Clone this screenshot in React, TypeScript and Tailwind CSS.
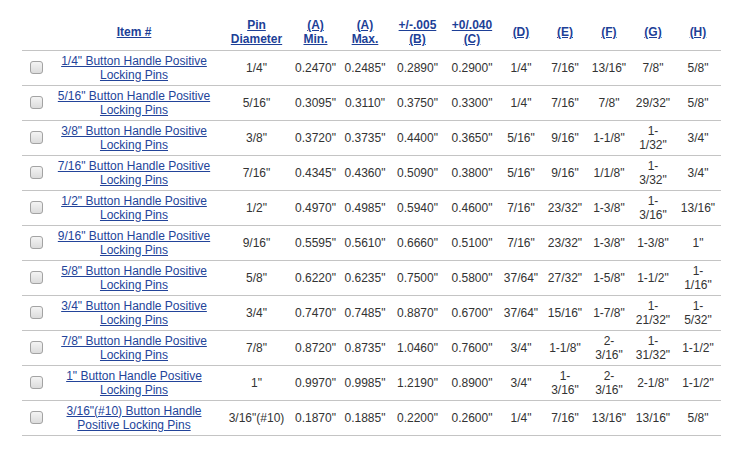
import React from "react";

type Row = { item: string; pin: string; vals: string[] };

const rows: Row[] = [
  { item: '1/4" Button Handle Positive Locking Pins', pin: '1/4"', vals: ['0.2470"', '0.2485"', '0.2890"', '0.2900"', '1/4"', '7/16"', '13/16"', '7/8"', '5/8"'] },
  { item: '5/16" Button Handle Positive Locking Pins', pin: '5/16"', vals: ['0.3095"', '0.3110"', '0.3750"', '0.3300"', '1/4"', '7/16"', '7/8"', '29/32"', '5/8"'] },
  { item: '3/8" Button Handle Positive Locking Pins', pin: '3/8"', vals: ['0.3720"', '0.3735"', '0.4400"', '0.3650"', '5/16"', '9/16"', '1-1/8"', '1-1/32"', '3/4"'] },
  { item: '7/16" Button Handle Positive Locking Pins', pin: '7/16"', vals: ['0.4345"', '0.4360"', '0.5090"', '0.3800"', '5/16"', '9/16"', '1/1/8"', '1-3/32"', '3/4"'] },
  { item: '1/2" Button Handle Positive Locking Pins', pin: '1/2"', vals: ['0.4970"', '0.4985"', '0.5940"', '0.4600"', '7/16"', '23/32"', '1-3/8"', '1-3/16"', '13/16"'] },
  { item: '9/16" Button Handle Positive Locking Pins', pin: '9/16"', vals: ['0.5595"', '0.5610"', '0.6660"', '0.5100"', '7/16"', '23/32"', '1-3/8"', '1-3/8"', '1"'] },
  { item: '5/8" Button Handle Positive Locking Pins', pin: '5/8"', vals: ['0.6220"', '0.6235"', '0.7500"', '0.5800"', '37/64"', '27/32"', '1-5/8"', '1-1/2"', '1-1/16"'] },
  { item: '3/4" Button Handle Positive Locking Pins', pin: '3/4"', vals: ['0.7470"', '0.7485"', '0.8870"', '0.6700"', '37/64"', '15/16"', '1-7/8"', '1-21/32"', '1-5/32"'] },
  { item: '7/8" Button Handle Positive Locking Pins', pin: '7/8"', vals: ['0.8720"', '0.8735"', '1.0460"', '0.7600"', '3/4"', '1-1/8"', '2-3/16"', '1-31/32"', '1-1/2"'] },
  { item: '1" Button Handle Positive Locking Pins', pin: '1"', vals: ['0.9970"', '0.9985"', '1.2190"', '0.8900"', '3/4"', '1-3/16"', '2-3/16"', '2-1/8"', '1-1/2"'] },
  { item: '3/16"(#10) Button Handle Positive Locking Pins', pin: '3/16"(#10)', vals: ['0.1870"', '0.1885"', '0.2200"', '0.2600"', '1/4"', '7/16"', '13/16"', '13/16"', '5/8"'] },
];

const headers: React.ReactNode[] = [
  <>(A)<br />Min.</>,
  <>(A)<br />Max.</>,
  <>+/-.005<br />(B)</>,
  <>+0/.040<br />(C)</>,
  <>(D)</>,
  <>(E)</>,
  <>(F)</>,
  <>(G)</>,
  <>(H)</>,
];

const valWidths = ["w-[48px]", "w-[50px]", "w-[55px]", "w-[54px]", "w-[44px]", "w-[44px]", "w-[44px]", "w-[44px]", "w-[46px]"];

function Check() {
  return (
    <div className="mx-auto h-[13px] w-[13px] rounded-[3px] border border-[#a3a3a3] bg-gradient-to-b from-[#f4f4f4] to-[#dcdcdc]" />
  );
}

export default function App() {
  return (
    <div className="min-h-[454px] w-[750px] bg-white pt-[14px] pl-[22px] font-['Liberation_Sans',Arial,sans-serif] text-[12px] leading-[14px] text-[#333]">
      <table className="table-fixed border-collapse">
        <colgroup>
          <col className="w-[24px]" />
          <col className="w-[176px]" />
          <col className="w-[69px]" />
          {valWidths.map((w, i) => (
            <col key={i} className={w} />
          ))}
        </colgroup>
        <thead>
          <tr className="border-b border-[#c4c4c4]">
            <th className="h-[36px] p-0" />
            <th className="h-[36px] px-[5px] pt-[4px] pb-[3px] text-center align-middle font-bold text-[#1d3f97] underline">Item #</th>
            <th className="h-[36px] px-[5px] pt-[4px] pb-[3px] text-center align-middle font-bold text-[#1d3f97] underline">Pin<br />Diameter</th>
            {headers.map((h, i) => (
              <th key={i} className="h-[36px] px-[4px] pt-[4px] pb-[3px] text-center align-middle font-bold text-[#1d3f97] underline">
                {h}
              </th>
            ))}
          </tr>
        </thead>
        <tbody>
          {rows.map((r, i) => (
            <tr key={i} className="border-b border-[#c4c4c4]">
              <td className="h-[35px] p-0 pl-[5px] align-middle">
                <Check />
              </td>
              <td className="h-[35px] px-[5px] py-0 text-center align-middle">
                <a className="text-[#23449a] underline" href="#">{r.item}</a>
              </td>
              <td className="h-[35px] px-[5px] py-0 text-center align-middle">{r.pin}</td>
              {r.vals.map((v, j) => (
                <td key={j} className="h-[35px] px-[4px] py-0 text-center align-middle">
                  {v}
                </td>
              ))}
            </tr>
          ))}
        </tbody>
      </table>
    </div>
  );
}
